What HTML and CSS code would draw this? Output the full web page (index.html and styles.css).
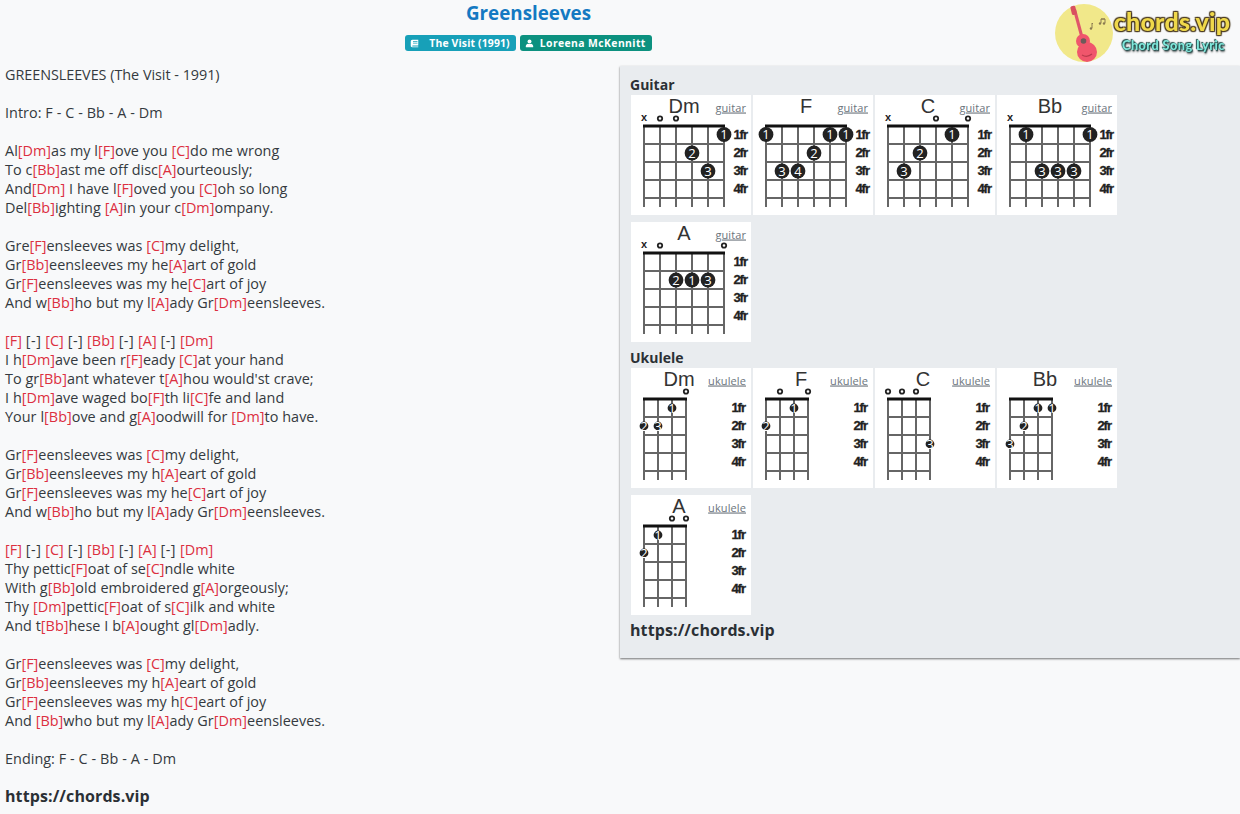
FILE: index.html
```html
<!DOCTYPE html>
<html lang="en">
<head>
<meta charset="utf-8">
<title>Greensleeves</title>
<link rel="stylesheet" href="styles.css">
</head>
<body>
<svg class="defs" width="0" height="0" aria-hidden="true">
  <symbol id="gridG" viewBox="0 0 120 120">
    <path class="str" d="M13 31V112M29 31V112M45 31V112M61 31V112M77 31V112M93 31V112"/>
    <path class="fret" d="M13 49H93M13 67H93M13 85H93M13 103H93"/>
    <path class="nut" d="M12 31H94"/>
  </symbol>
  <symbol id="gridU" viewBox="0 0 120 120">
    <path class="str" d="M13 31V112M27 31V112M41 31V112M55 31V112"/>
    <path class="fret" d="M13 49H55M13 67H55M13 85H55M13 103H55"/>
    <path class="nut" d="M12 31H56"/>
  </symbol>
</svg>

<header class="top">
  <div class="head-main">
    <h1 class="title">Greensleeves</h1>
    <div class="badges">
      <a class="badge album">
        <svg class="ico" viewBox="0 0 12 12"><path d="M3 1h8v7.5H3.6c-.8 0-.8 1.500 0 1.500H11v1H3C1.500 11 1 10 1 9V3c0-1 1-2 2-2zm1 2v1h6V3zm0 2v1h6V5z" fill-rule="evenodd"/></svg>
        <span class="album-text">The Visit (1991)</span>
      </a>
      <a class="badge artist">
        <svg class="ico" viewBox="0 0 12 12"><circle cx="6" cy="3.300" r="2.600"/><path d="M1.800 11c-.5 0-.8-.3-.8-.8C1 8 2.200 6.500 4 6.300c1.200.6 2.800.6 4 0 1.800.2 3 1.700 3 3.900 0 .5-.3.8-.8.8z"/></svg>
        <span class="artist-text">Loreena McKennitt</span>
      </a>
    </div>
  </div>
  <a class="logo">
    <svg class="logo-art" viewBox="0 0 60 60">
      <circle cx="29" cy="30" r="29" fill="#f1e88a"/>
      <path d="M18 7l3-1 7 26-3 1z" fill="#e0566a"/>
      <rect x="16" y="3" width="5" height="9" rx="1.500" transform="rotate(-14 18 7)" fill="#d8505f"/>
      <circle cx="28" cy="38" r="7" fill="#f0566c"/>
      <circle cx="32" cy="49" r="10" fill="#f0566c"/>
      <circle cx="28.500" cy="38" r="2.800" fill="#6d5a5a"/>
      <path d="M27 52q5 3 10-1" fill="none" stroke="#b83a4c" stroke-width="1.200"/>
      <path d="M37 25v-5M37 20l1 1M46 20v-4h4v4M46 16h4" fill="none" stroke="#8a7a50" stroke-width="1"/>
      <circle cx="45" cy="20.500" r="1.200" fill="#8a7a50"/><circle cx="49" cy="20.500" r="1.200" fill="#8a7a50"/><circle cx="36" cy="25.500" r="1.200" fill="#8a7a50"/>
    </svg>
    <span class="logo-words">
      <span class="logo-name">chords.vip</span>
      <span class="logo-sub">Chord Song Lyric</span>
    </span>
  </a>
</header>

<main class="page">
<section class="lyrics">
<p class="stanza upper">GREENSLEEVES (The Visit - 1991)</p>
<p class="stanza">Intro: F - C - Bb - A - Dm</p>
<p class="stanza">Al<b>[Dm]</b>as my l<b>[F]</b>ove you <b>[C]</b>do me wrong
To c<b>[Bb]</b>ast me off disc<b>[A]</b>ourteously;
And<b>[Dm]</b> I have l<b>[F]</b>oved you <b>[C]</b>oh so long
Del<b>[Bb]</b>ighting <b>[A]</b>in your c<b>[Dm]</b>ompany.</p>
<p class="stanza">Gre<b>[F]</b>ensleeves was <b>[C]</b>my delight,
Gr<b>[Bb]</b>eensleeves my he<b>[A]</b>art of gold
Gr<b>[F]</b>eensleeves was my he<b>[C]</b>art of joy
And w<b>[Bb]</b>ho but my l<b>[A]</b>ady Gr<b>[Dm]</b>eensleeves.</p>
<p class="stanza"><b>[F]</b> <i>[-]</i> <b>[C]</b> <i>[-]</i> <b>[Bb]</b> <i>[-]</i> <b>[A]</b> <i>[-]</i> <b>[Dm]</b>
I h<b>[Dm]</b>ave been r<b>[F]</b>eady <b>[C]</b>at your hand
To gr<b>[Bb]</b>ant whatever t<b>[A]</b>hou would'st crave;
I h<b>[Dm]</b>ave waged bo<b>[F]</b>th li<b>[C]</b>fe and land
Your l<b>[Bb]</b>ove and g<b>[A]</b>oodwill for <b>[Dm]</b>to have.</p>
<p class="stanza">Gr<b>[F]</b>eensleeves was <b>[C]</b>my delight,
Gr<b>[Bb]</b>eensleeves my h<b>[A]</b>eart of gold
Gr<b>[F]</b>eensleeves was my he<b>[C]</b>art of joy
And w<b>[Bb]</b>ho but my l<b>[A]</b>ady Gr<b>[Dm]</b>eensleeves.</p>
<p class="stanza"><b>[F]</b> <i>[-]</i> <b>[C]</b> <i>[-]</i> <b>[Bb]</b> <i>[-]</i> <b>[A]</b> <i>[-]</i> <b>[Dm]</b>
Thy pettic<b>[F]</b>oat of se<b>[C]</b>ndle white
With g<b>[Bb]</b>old embroidered g<b>[A]</b>orgeously;
Thy <b>[Dm]</b>pettic<b>[F]</b>oat of s<b>[C]</b>ilk and white
And t<b>[Bb]</b>hese I b<b>[A]</b>ought gl<b>[Dm]</b>adly.</p>
<p class="stanza">Gr<b>[F]</b>eensleeves was <b>[C]</b>my delight,
Gr<b>[Bb]</b>eensleeves my h<b>[A]</b>eart of gold
Gr<b>[F]</b>eensleeves was my h<b>[C]</b>eart of joy
And <b>[Bb]</b>who but my l<b>[A]</b>ady Gr<b>[Dm]</b>eensleeves.</p>
<p class="stanza">Ending: F - C - Bb - A - Dm</p>
<p class="site">https://chords.vip</p>
</section>

<aside class="panel">
  <h2 class="inst">Guitar</h2>
  <div class="chords">
    <svg class="card" viewBox="0 0 120 120"><use href="#gridG"/>
      <g class="fr"><text x="116" y="44">1fr</text><text x="116" y="62">2fr</text><text x="116" y="80">3fr</text><text x="116" y="98">4fr</text></g>
      <text class="name" x="53" y="18">Dm</text><text class="kind" x="115" y="16.500">guitar</text>
      <text class="mark" x="13" y="26">x</text><circle class="open" cx="29" cy="23.500" r="2.200"/><circle class="open" cx="45" cy="23.500" r="2.200"/>
      <circle class="dot" cx="93" cy="39.500" r="7.400"/><text class="num" x="93" y="44">1</text>
      <circle class="dot" cx="61" cy="58" r="7.400"/><text class="num" x="61" y="62.500">2</text>
      <circle class="dot" cx="77" cy="76" r="7.400"/><text class="num" x="77" y="80.500">3</text>
    </svg>
    <svg class="card" viewBox="0 0 120 120"><use href="#gridG"/>
      <g class="fr"><text x="116" y="44">1fr</text><text x="116" y="62">2fr</text><text x="116" y="80">3fr</text><text x="116" y="98">4fr</text></g>
      <text class="name" x="53" y="18">F</text><text class="kind" x="115" y="16.500">guitar</text>
      <circle class="dot" cx="13" cy="39.500" r="7.400"/><text class="num" x="13" y="44">1</text>
      <circle class="dot" cx="77" cy="39.500" r="7.400"/><text class="num" x="77" y="44">1</text>
      <circle class="dot" cx="93" cy="39.500" r="7.400"/><text class="num" x="93" y="44">1</text>
      <circle class="dot" cx="61" cy="58" r="7.400"/><text class="num" x="61" y="62.500">2</text>
      <circle class="dot" cx="29" cy="76" r="7.400"/><text class="num" x="29" y="80.500">3</text>
      <circle class="dot" cx="45" cy="76" r="7.400"/><text class="num" x="45" y="80.500">4</text>
    </svg>
    <svg class="card" viewBox="0 0 120 120"><use href="#gridG"/>
      <g class="fr"><text x="116" y="44">1fr</text><text x="116" y="62">2fr</text><text x="116" y="80">3fr</text><text x="116" y="98">4fr</text></g>
      <text class="name" x="53" y="18">C</text><text class="kind" x="115" y="16.500">guitar</text>
      <text class="mark" x="13" y="26">x</text><circle class="open" cx="61" cy="23.500" r="2.200"/><circle class="open" cx="93" cy="23.500" r="2.200"/>
      <circle class="dot" cx="77" cy="39.500" r="7.400"/><text class="num" x="77" y="44">1</text>
      <circle class="dot" cx="45" cy="58" r="7.400"/><text class="num" x="45" y="62.500">2</text>
      <circle class="dot" cx="29" cy="76" r="7.400"/><text class="num" x="29" y="80.500">3</text>
    </svg>
    <svg class="card" viewBox="0 0 120 120"><use href="#gridG"/>
      <g class="fr"><text x="116" y="44">1fr</text><text x="116" y="62">2fr</text><text x="116" y="80">3fr</text><text x="116" y="98">4fr</text></g>
      <text class="name" x="53" y="18">Bb</text><text class="kind" x="115" y="16.500">guitar</text>
      <text class="mark" x="13" y="26">x</text>
      <circle class="dot" cx="29" cy="39.500" r="7.400"/><text class="num" x="29" y="44">1</text>
      <circle class="dot" cx="93" cy="39.500" r="7.400"/><text class="num" x="93" y="44">1</text>
      <circle class="dot" cx="45" cy="76" r="7.400"/><text class="num" x="45" y="80.500">3</text>
      <circle class="dot" cx="61" cy="76" r="7.400"/><text class="num" x="61" y="80.500">3</text>
      <circle class="dot" cx="77" cy="76" r="7.400"/><text class="num" x="77" y="80.500">3</text>
    </svg>
    <svg class="card" viewBox="0 0 120 120"><use href="#gridG"/>
      <g class="fr"><text x="116" y="44">1fr</text><text x="116" y="62">2fr</text><text x="116" y="80">3fr</text><text x="116" y="98">4fr</text></g>
      <text class="name" x="53" y="18">A</text><text class="kind" x="115" y="16.500">guitar</text>
      <text class="mark" x="13" y="26">x</text><circle class="open" cx="29" cy="23.500" r="2.200"/><circle class="open" cx="93" cy="23.500" r="2.200"/>
      <circle class="dot" cx="45" cy="58" r="7.400"/><text class="num" x="45" y="62.500">2</text>
      <circle class="dot" cx="61" cy="58" r="7.400"/><text class="num" x="61" y="62.500">1</text>
      <circle class="dot" cx="77" cy="58" r="7.400"/><text class="num" x="77" y="62.500">3</text>
    </svg>
  </div>
  <h2 class="inst inst-uke">Ukulele</h2>
  <div class="chords">
    <svg class="card" viewBox="0 0 120 120"><use href="#gridU"/>
      <g class="fr"><text x="114" y="44">1fr</text><text x="114" y="62">2fr</text><text x="114" y="80">3fr</text><text x="114" y="98">4fr</text></g>
      <text class="name" x="48" y="18">Dm</text><text class="kind" x="115" y="16.500">ukulele</text>
      <circle class="open" cx="55" cy="23.500" r="2.200"/>
      <circle class="dot" cx="41" cy="40" r="4.400"/><text class="num" x="41" y="44.500">1</text>
      <circle class="dot" cx="13" cy="58" r="4.400"/><text class="num" x="13" y="62.500">2</text>
      <circle class="dot" cx="27" cy="58" r="4.400"/><text class="num" x="27" y="62.500">3</text>
    </svg>
    <svg class="card" viewBox="0 0 120 120"><use href="#gridU"/>
      <g class="fr"><text x="114" y="44">1fr</text><text x="114" y="62">2fr</text><text x="114" y="80">3fr</text><text x="114" y="98">4fr</text></g>
      <text class="name" x="48" y="18">F</text><text class="kind" x="115" y="16.500">ukulele</text>
      <circle class="open" cx="27" cy="23.500" r="2.200"/><circle class="open" cx="55" cy="23.500" r="2.200"/>
      <circle class="dot" cx="41" cy="40" r="4.400"/><text class="num" x="41" y="44.500">1</text>
      <circle class="dot" cx="13" cy="58" r="4.400"/><text class="num" x="13" y="62.500">2</text>
    </svg>
    <svg class="card" viewBox="0 0 120 120"><use href="#gridU"/>
      <g class="fr"><text x="114" y="44">1fr</text><text x="114" y="62">2fr</text><text x="114" y="80">3fr</text><text x="114" y="98">4fr</text></g>
      <text class="name" x="48" y="18">C</text><text class="kind" x="115" y="16.500">ukulele</text>
      <circle class="open" cx="13" cy="23.500" r="2.200"/><circle class="open" cx="27" cy="23.500" r="2.200"/><circle class="open" cx="41" cy="23.500" r="2.200"/>
      <circle class="dot" cx="55" cy="76" r="4.400"/><text class="num" x="55" y="80.500">3</text>
    </svg>
    <svg class="card" viewBox="0 0 120 120"><use href="#gridU"/>
      <g class="fr"><text x="114" y="44">1fr</text><text x="114" y="62">2fr</text><text x="114" y="80">3fr</text><text x="114" y="98">4fr</text></g>
      <text class="name" x="48" y="18">Bb</text><text class="kind" x="115" y="16.500">ukulele</text>
      <circle class="dot" cx="41" cy="40" r="4.400"/><text class="num" x="41" y="44.500">1</text>
      <circle class="dot" cx="55" cy="40" r="4.400"/><text class="num" x="55" y="44.500">1</text>
      <circle class="dot" cx="27" cy="58" r="4.400"/><text class="num" x="27" y="62.500">2</text>
      <circle class="dot" cx="13" cy="76" r="4.400"/><text class="num" x="13" y="80.500">3</text>
    </svg>
    <svg class="card" viewBox="0 0 120 120"><use href="#gridU"/>
      <g class="fr"><text x="114" y="44">1fr</text><text x="114" y="62">2fr</text><text x="114" y="80">3fr</text><text x="114" y="98">4fr</text></g>
      <text class="name" x="48" y="18">A</text><text class="kind" x="115" y="16.500">ukulele</text>
      <circle class="open" cx="41" cy="23.500" r="2.200"/><circle class="open" cx="55" cy="23.500" r="2.200"/>
      <circle class="dot" cx="27" cy="40" r="4.400"/><text class="num" x="27" y="44.500">1</text>
      <circle class="dot" cx="13" cy="58" r="4.400"/><text class="num" x="13" y="62.500">2</text>
    </svg>
  </div>
  <p class="site panel-site">https://chords.vip</p>
</aside>
</main>
</body>
</html>
```

FILE: styles.css
```css
* { box-sizing: border-box; }
html, body { margin: 0; height: 814px; overflow: hidden; }
body {
  background: #f8f9fa;
  color: #343a40;
  font-family: "Open Sans", sans-serif;
  font-size: 14.4px;
}
.defs { position: absolute; }

.top {
  display: flex;
  height: 65px;
}
.head-main {
  width: 1057px;
  display: flex;
  flex-direction: column;
  align-items: center;
}
.title {
  margin: 0;
  font-size: 18.8px;
  line-height: 26px;
  font-weight: 700;
  color: #1479c2;
}
.badges {
  display: flex;
  gap: 4px;
  margin-top: 9px;
}
.badge {
  display: flex;
  align-items: center;
  height: 16px;
  padding: 0 6px 0 5px;
  border-radius: 3px;
  color: #fff;
  font-size: 10.4px;
  font-weight: 700;
}
.album { background: #17a0b8; }
.artist { background: #0c917f; }
.ico { width: 9px; height: 9px; fill: #fff; flex: none; }
.album-text { margin-left: 10px; letter-spacing: 0.16px; }
.artist-text { margin-left: 6px; letter-spacing: 0.4px; }

.logo {
  display: flex;
  flex: 1;
  align-items: flex-start;
  padding-top: 3px;
  margin-left: -2px;
  filter: blur(0.3px);
}
.logo-art { width: 60px; height: 60px; flex: none; }
.logo-words {
  display: flex;
  flex-direction: column;
  align-items: center;
  margin-left: -3px;
  width: 120px;
}
.logo-name {
  font-family: "Lato", sans-serif;
  font-weight: 900;
  font-size: 25px;
  line-height: 30px;
  margin-top: 3px;
  letter-spacing: 0.2px;
  color: #efd84a;
  text-shadow: 0 0 2px #4a3a20, 1px 1px 1px #4a3a20, -1px -1px 1px #4a3a20, 1px -1px 1px #4a3a20, -1px 1px 1px #4a3a20;
}
.logo-sub {
  font-family: "Lato", sans-serif;
  font-weight: 900;
  font-size: 12.6px;
  line-height: 16px;
  margin-top: 2px;
  margin-left: 3px;
  letter-spacing: 0.5px;
  color: #7fe8dc;
  text-shadow: 0 0 1px #1f4a48, 1px 1px 1px #1f4a48, -1px -1px 1px #1f4a48, 1px 2px 2px #555;
}

.page {
  display: grid;
  grid-template-columns: 620px 620px;
  align-items: start;
}
.lyrics { padding-left: 5px; }
.stanza {
  margin: 0 0 19px;
  line-height: 19px;
  white-space: pre-line;
  letter-spacing: 0.03px;
  word-spacing: 0.1px;
}
.upper { letter-spacing: -0.05px; }
.stanza b { font-weight: 400; color: #dc2f3f; }
.stanza i { font-style: normal; letter-spacing: 0.5px; }
.site {
  margin: 0;
  font-size: 16px;
  font-weight: 700;
  line-height: 19px;
  letter-spacing: 0.1px;
  color: #2b3035;
}

.panel {
  height: 592px;
  margin-top: 1px;
  padding: 9px 0 0 10px;
  background: #e9ecef;
  box-shadow: 0 1px 2px rgba(0,0,0,.55);
}
.inst {
  margin: 0 0 1px;
  font-size: 14px;
  line-height: 19px;
  font-weight: 700;
  color: #2b3035;
}
.inst-uke { margin-top: 6px; }
.chords {
  display: flex;
  flex-wrap: wrap;
  gap: 7px 2px;
  width: 500px;
  margin-left: 1px;
}
.card {
  width: 120px;
  height: 120px;
  background: #fff;
  display: block;
}
.panel-site { margin-top: 6px; }

.str { stroke: #666; stroke-width: 2; fill: none; }
.fret { stroke: #666; stroke-width: 2; fill: none; }
.nut { stroke: #111; stroke-width: 3; fill: none; }
.fr text {
  font-family: "Liberation Sans", sans-serif;
  font-size: 13px;
  font-weight: 700;
  text-anchor: end;
  letter-spacing: -1px;
  fill: #222;
  stroke: #222;
  stroke-width: 0.3;
}
.name {
  font-family: "Liberation Sans", sans-serif;
  font-size: 20px;
  text-anchor: middle;
  fill: #333;
}
.kind {
  font-family: "Open Sans", sans-serif;
  font-size: 11px;
  letter-spacing: 0.1px;
  text-anchor: end;
  text-decoration: underline;
  fill: #6c757d;
}
.mark {
  font-family: "Liberation Sans", sans-serif;
  font-size: 11px;
  font-weight: 700;
  text-anchor: middle;
  fill: #222;
}
.open { fill: none; stroke: #222; stroke-width: 1.800; }
.dot { fill: #222; }
.num {
  font-family: "Open Sans", sans-serif;
  font-size: 13px;
  text-anchor: middle;
  fill: #fff;
}
```
